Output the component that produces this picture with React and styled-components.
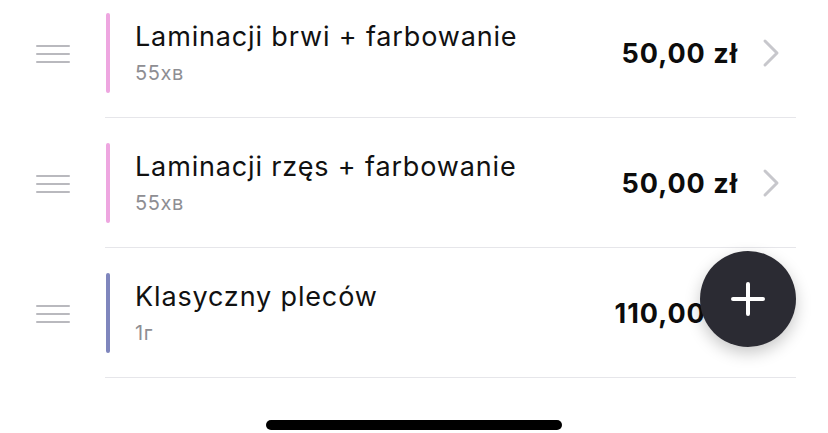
import React from 'react';
import styled, { createGlobalStyle } from 'styled-components';

const GlobalStyle = createGlobalStyle`
    html, body {
        margin: 0;
        padding: 0;
        background: #fff;
        overflow: hidden;
    }
    body {
        font-family: Inter, "Noto Sans", sans-serif;
        -webkit-font-smoothing: antialiased;
    }
`;

const Screen = styled.div`
    position: relative;
    width: 828px;
    height: 433px;
    overflow: hidden;
    background: #fff;
`;

const List = styled.div`
    display: flex;
    flex-direction: column;
    margin-top: -12px;
`;

const Row = styled.div`
    display: flex;
    align-items: stretch;
    height: 130px;
`;

const HandleCell = styled.div`
    width: 105px;
    display: flex;
    align-items: center;
    justify-content: center;
    padding-top: 2px;
    box-sizing: border-box;
`;

const Handle = styled.div`
    display: flex;
    flex-direction: column;
    gap: 6px;
    width: 34px;

    span {
        display: block;
        height: 2px;
        background: #b9b9be;
        border-radius: 1px;
    }
`;

const Content = styled.div`
    flex: 1;
    display: flex;
    align-items: center;
    margin-right: 32px;
    padding: 25px 16px 24px 1px;
    border-bottom: 1px solid #e6e6ea;
`;

const Accent = styled.div`
    width: 4px;
    align-self: stretch;
    border-radius: 2px;
    background: ${p => p.color};
    margin-right: 25px;
`;

const Info = styled.div`
    flex: 1;
    display: flex;
    flex-direction: column;
    padding-bottom: 2px;
`;

const Title = styled.div`
    font-size: 27px;
    color: #111;
    line-height: 34px;
    letter-spacing: 0.85px;
`;

const Duration = styled.div`
    font-size: 20px;
    color: #8e8e93;
    line-height: 24px;
    margin-top: 7px;
    letter-spacing: 0.6px;
`;

const Price = styled.div`
    font-size: 27px;
    font-weight: 700;
    color: #0c0c0c;
    margin-right: 24px;
    letter-spacing: 1px;
    white-space: nowrap;
`;

const Chevron = styled.svg`
    width: 18px;
    height: 30px;
    flex-shrink: 0;
`;

const Fab = styled.button`
    position: absolute;
    left: 700px;
    top: 251px;
    width: 96px;
    height: 96px;
    border-radius: 50%;
    border: none;
    padding: 0;
    background: #2b2b33;
    box-shadow: 0 6px 16px rgba(0, 0, 0, 0.22);
    display: flex;
    align-items: center;
    justify-content: center;
`;

const HomeIndicator = styled.div`
    position: absolute;
    left: 266px;
    bottom: 3px;
    width: 296px;
    height: 10px;
    border-radius: 5px;
    background: #000;
`;

const services = [
    { title: 'Laminacji brwi + farbowanie', duration: '55хв', price: '50,00 zł', color: '#eea6e0' },
    { title: 'Laminacji rzęs + farbowanie', duration: '55хв', price: '50,00 zł', color: '#eea6e0' },
    { title: 'Klasyczny pleców', duration: '1г', price: '110,00 zł', color: '#7f86bd' },
];

const App = () => {
    return (
        <Screen>
            <GlobalStyle />
            <List>
                {services.map(s => (
                    <Row key={s.title}>
                        <HandleCell>
                            <Handle>
                                <span />
                                <span />
                                <span />
                            </Handle>
                        </HandleCell>
                        <Content>
                            <Accent color={s.color} />
                            <Info>
                                <Title>{s.title}</Title>
                                <Duration>{s.duration}</Duration>
                            </Info>
                            <Price>{s.price}</Price>
                            <Chevron viewBox="0 0 18 30">
                                <path d="M3 3 L15 15 L3 27" fill="none" stroke="#c7c7cc" strokeWidth="3" strokeLinecap="round" strokeLinejoin="round" />
                            </Chevron>
                        </Content>
                    </Row>
                ))}
            </List>
            <Fab aria-label="Dodaj">
                <svg width="34" height="34" viewBox="0 0 34 34">
                    <path d="M17 2 V32 M2 17 H32" stroke="#fff" strokeWidth="4" strokeLinecap="round" />
                </svg>
            </Fab>
            <HomeIndicator />
        </Screen>
    );
};

export default App;
